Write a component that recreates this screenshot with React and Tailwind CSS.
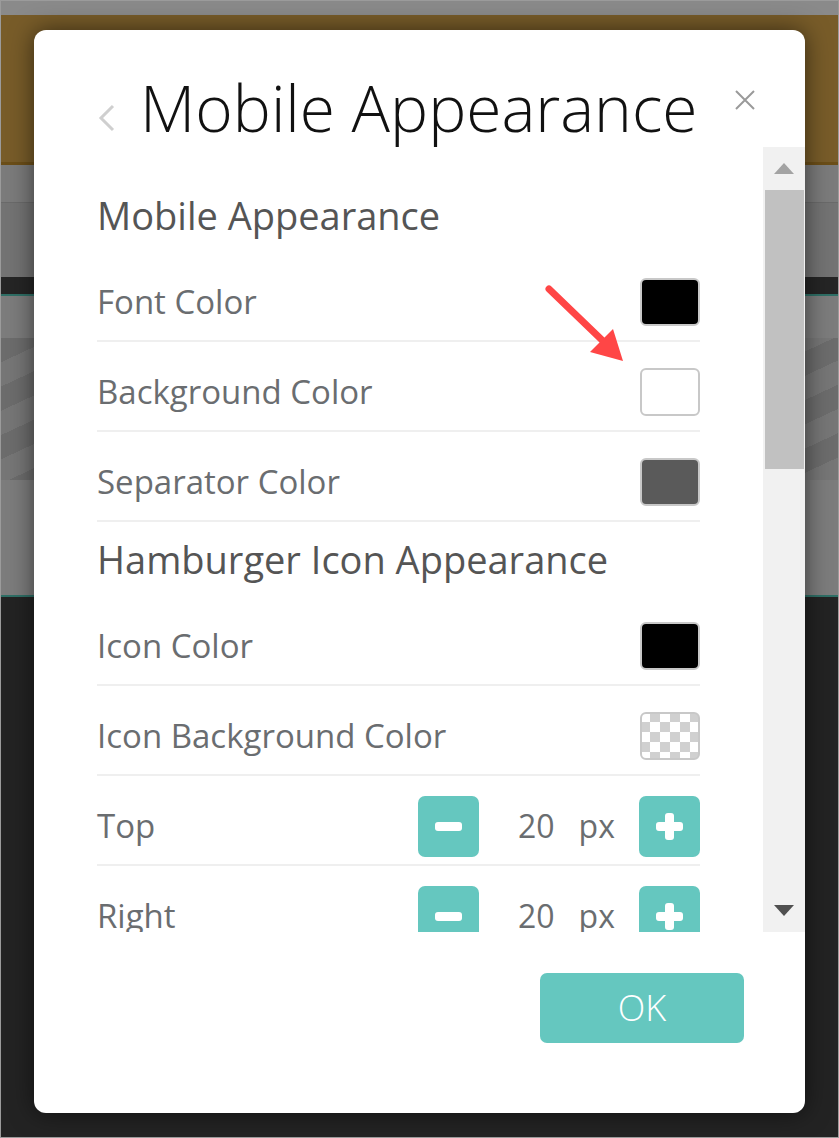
import React from "react";

const TEAL = "bg-[#65c7bf]";

/* ---------- small pieces ---------- */
function Swatch({ kind }) {
  if (kind === "checker")
    return (
      <div className="h-[48px] w-[60px] rounded-[6px] border-2 border-[#c8c8c8] bg-[image:conic-gradient(#d0d0d0_25%,#ffffff_0_50%,#d0d0d0_0_75%,#ffffff_0)] bg-[length:20px_20px] bg-[position:-2px_-2px]" />
    );
  const fill =
    kind === "black" ? "bg-black" : kind === "white" ? "bg-white" : "bg-[#5a5a5a]";
  return <div className={`h-[48px] w-[60px] rounded-[6px] border-2 border-[#c8c8c8] ${fill}`} />;
}

function Row({ label, children }) {
  return (
    <div className="flex h-[90px] items-center justify-between border-b-2 border-[#efefef] pt-[12px]">
      <span className="text-[33px] text-[#6a6d70]">{label}</span>
      {children}
    </div>
  );
}

function Stepper({ value }) {
  return (
    <div className="flex items-center">
      <button className={`flex h-[61px] w-[61px] items-center justify-center rounded-[7px] ${TEAL}`}>
        <span className="block h-[9px] w-[27px] rounded-[3px] bg-white" />
      </button>
      <div className="flex w-[160px] items-center gap-[24px] pl-[39px] text-[32px] text-[#6a6d70]">
        <span>{value}</span>
        <span>px</span>
      </div>
      <button className={`relative flex h-[61px] w-[61px] items-center justify-center rounded-[7px] ${TEAL}`}>
        <span className="block h-[9px] w-[27px] rounded-[3px] bg-white" />
        <span className="absolute block h-[27px] w-[9px] rounded-[3px] bg-white" />
      </button>
    </div>
  );
}

function Triangle({ up, color }) {
  return (
    <svg width="20" height="11" viewBox="0 0 20 11">
      <polygon points={up ? "10,0 20,11 0,11" : "0,0 20,0 10,11"} fill={color} />
    </svg>
  );
}

/* ---------- page ---------- */
export default function App() {
  return (
    <div className="relative h-[1138px] w-[839px] overflow-hidden border border-[#9b9b9b] bg-[#232323] font-['Open_Sans',sans-serif]">
      {/* the page behind the dialog */}
      <div className="flex flex-col">
        <div className="h-[14px] bg-[#8a8a8a]" />
        <div className="h-[150px] border-b-[3px] border-[#6b4e18] bg-[#785c29]" />
        <div className="h-[37px] bg-[#7b7b7b]" />
        <div className="h-[75px] border-t border-[#6a6a6a] bg-[#737373]" />
        <div className="h-[17px] bg-[#252525]" />
        <div className="h-[2px] bg-[#2f6f66]" />
        <div className="h-[42px] bg-[#7c7c7c]" />
        <div className="h-[142px] bg-[#707070] bg-[image:repeating-linear-gradient(155deg,#6c6c6c_0_22px,#767676_22px_44px)]" />
        <div className="h-[115px] bg-[#7c7c7c]" />
        <div className="h-[2px] bg-[#2f6f66]" />
      </div>

      {/* dialog */}
      <div className="absolute left-[33px] top-[29px] flex h-[1083px] w-[771px] flex-col overflow-hidden rounded-[12px] bg-white shadow-[0_0_24px_rgba(0,0,0,0.55)]">
        <div className="flex h-[117px] items-start pl-[63px] pr-[50px] pt-[46px]">
          <svg className="mt-[28px] shrink-0" width="18" height="28" viewBox="0 0 18 28">
            <polyline points="16,2 4,14 16,26" fill="none" stroke="#cfcfcf" strokeWidth="3" />
          </svg>
          <h1 className="ml-[25px] text-[64px] font-light leading-none text-[#111]">Mobile Appearance</h1>
          <svg className="ml-auto mt-[14px] shrink-0" width="20" height="20" viewBox="0 0 20 20">
            <path d="M1 1 L19 19 M19 1 L1 19" stroke="#9a9a9a" strokeWidth="2" />
          </svg>
        </div>

        <div className="flex h-[785px]">
          <div className="flex-1 overflow-hidden px-[63px]">
            <h2 className="mb-[11px] mt-[42px] text-[38px] leading-[52px] text-[#555]">Mobile Appearance</h2>
            <Row label="Font Color">
              <Swatch kind="black" />
            </Row>
            <Row label="Background Color">
              <Swatch kind="white" />
            </Row>
            <Row label="Separator Color">
              <Swatch kind="gray" />
            </Row>

            <h2 className="mb-[11px] mt-[11px] text-[38px] leading-[52px] text-[#555]">Hamburger Icon Appearance</h2>
            <Row label="Icon Color">
              <Swatch kind="black" />
            </Row>
            <Row label="Icon Background Color">
              <Swatch kind="checker" />
            </Row>
            <Row label="Top">
              <Stepper value={20} />
            </Row>
            <Row label="Right">
              <Stepper value={20} />
            </Row>
          </div>

          {/* scrollbar */}
          <div className="flex w-[42px] flex-col bg-[#f1f1f1]">
            <div className="flex h-[43px] items-center justify-center">
              <Triangle up color="#a3a3a3" />
            </div>
            <div className="ml-[2px] mr-[1px] h-[279px] bg-[#c1c1c1]" />
            <div className="flex-1" />
            <div className="flex h-[43px] items-center justify-center">
              <Triangle color="#505050" />
            </div>
          </div>
        </div>

        <div className="flex justify-end pr-[61px] pt-[41px]">
          <button className={`h-[70px] w-[204px] rounded-[7px] text-[36px] font-light text-white ${TEAL}`}>OK</button>
        </div>
      </div>

      {/* red annotation arrow */}
      <svg className="absolute left-[530px] top-[270px]" width="110" height="100" viewBox="530 270 110 100">
        <line x1="548" y1="288" x2="602" y2="340" stroke="#ff4646" strokeWidth="7" strokeLinecap="round" />
        <polygon points="622,360 589,351 612,328" fill="#ff4646" />
      </svg>
    </div>
  );
}
